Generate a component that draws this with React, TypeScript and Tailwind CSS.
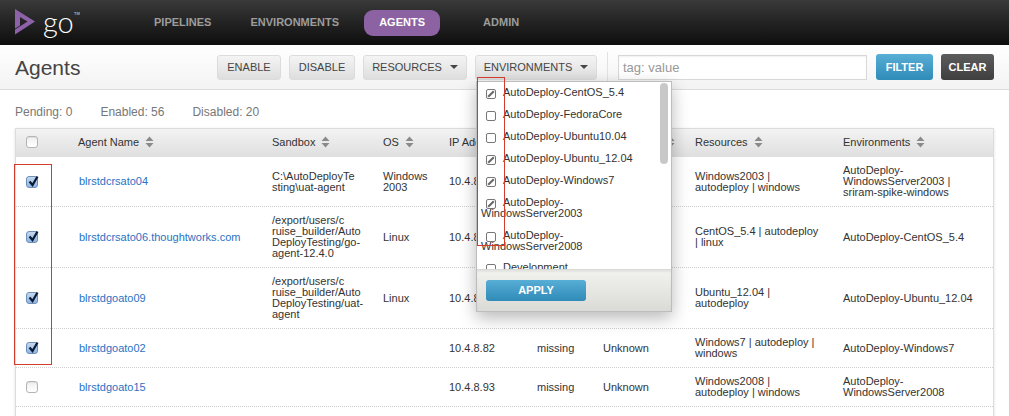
const navItems = [
  { label: 'PIPELINES', className: 'ml-[73px]' },
  { label: 'ENVIRONMENTS', className: 'ml-[39px]' },
]

const columnClass =
  'grid grid-cols-[63px_193px_111px_66px_88px_66px_92px_148px_1fr] items-center'

const agents = [
  {
    name: 'blrstdcrsato04',
    sandbox: ['C:\\AutoDeployTe', 'sting\\uat-agent'],
    os: ['Windows', '2003'],
    ip: '10.4.8.80',
    status: 'missing',
    space: 'Unknown',
    resources: ['Windows2003 |', 'autodeploy | windows'],
    environments: ['AutoDeploy-', 'WindowsServer2003 |', 'sriram-spike-windows'],
    checked: true,
    height: 'h-[50px]',
  },
  {
    name: 'blrstdcrsato06.thoughtworks.com',
    sandbox: ['/export/users/c', 'ruise_builder/Auto', 'DeployTesting/go-', 'agent-12.4.0'],
    os: ['Linux'],
    ip: '10.4.8.81',
    status: 'missing',
    space: 'Unknown',
    resources: ['CentOS_5.4 | autodeploy', '| linux'],
    environments: ['AutoDeploy-CentOS_5.4'],
    checked: true,
    height: 'h-[61px]',
  },
  {
    name: 'blrstdgoato09',
    sandbox: ['/export/users/c', 'ruise_builder/Auto', 'DeployTesting/uat-', 'agent'],
    os: ['Linux'],
    ip: '10.4.8.89',
    status: 'missing',
    space: 'Unknown',
    resources: ['Ubuntu_12.04 |', 'autodeploy'],
    environments: ['AutoDeploy-Ubuntu_12.04'],
    checked: true,
    height: 'h-[61px]',
  },
  {
    name: 'blrstdgoato02',
    sandbox: [],
    os: [],
    ip: '10.4.8.82',
    status: 'missing',
    space: 'Unknown',
    resources: ['Windows7 | autodeploy |', 'windows'],
    environments: ['AutoDeploy-Windows7'],
    checked: true,
    height: 'h-[39px]',
  },
  {
    name: 'blrstdgoato15',
    sandbox: [],
    os: [],
    ip: '10.4.8.93',
    status: 'missing',
    space: 'Unknown',
    resources: ['Windows2008 |', 'autodeploy | windows'],
    environments: ['AutoDeploy-', 'WindowsServer2008'],
    checked: false,
    height: 'h-[39px]',
  },
]

const environmentOptions = [
  { lines: ['AutoDeploy-CentOS_5.4'], checked: true, height: 'h-[22px]' },
  { lines: ['AutoDeploy-FedoraCore'], checked: false, height: 'h-[22px]' },
  { lines: ['AutoDeploy-Ubuntu10.04'], checked: false, height: 'h-[22px]' },
  { lines: ['AutoDeploy-Ubuntu_12.04'], checked: true, height: 'h-[22px]' },
  { lines: ['AutoDeploy-Windows7'], checked: true, height: 'h-[22px]' },
  { lines: ['AutoDeploy-', 'WindowsServer2003'], checked: true, height: 'h-[33px]' },
  { lines: ['AutoDeploy-', 'WindowsServer2008'], checked: false, height: 'h-[32px]' },
  { lines: ['Development'], checked: false, height: 'h-[22px]' },
]

function Lines({ lines }: { lines: string[] }) {
  return (
    <div>
      {lines.map((line) => (
        <div key={line} className="whitespace-nowrap">
          {line}
        </div>
      ))}
    </div>
  )
}

function Caret() {
  return <span className="ml-2 h-0 w-0 border-x-[4px] border-t-[4px] border-x-transparent border-t-[#444]" />
}

function SortIcon() {
  return (
    <svg width="9" height="12" viewBox="0 0 9 12" className="ml-[6px]">
      <path d="M4.5 0.5 8.5 5H0.5Z M0.5 7H8.5L4.5 11.5Z" fill="#8a8a8a" />
    </svg>
  )
}

function TableCheckbox({ checked }: { checked: boolean }) {
  if (!checked) {
    return (
      <span className="block size-[12px] rounded-[3px] border border-[#b5b5b5] bg-gradient-to-b from-[#f0f0f0] to-white shadow-[inset_0_1px_1px_rgba(0,0,0,0.08)]" />
    )
  }
  return (
    <span className="relative block size-[12px] rounded-[3px] border border-[#6d8fb8] bg-gradient-to-b from-[#c5d8ef] to-[#8fb6e6]">
      <svg width="14" height="14" viewBox="0 0 14 14" className="absolute -top-[3px] -left-[0.5px]">
        <path d="M2.5 7.5 5.5 11 10.5 2.5" fill="none" stroke="#0b1a33" strokeWidth="2.2" />
      </svg>
    </span>
  )
}

function MenuCheckbox({ checked }: { checked: boolean }) {
  return (
    <span className="flex size-[10px] shrink-0 items-center justify-center rounded-[2px] border border-[#777] bg-white">
      {checked && (
        <svg width="8" height="8" viewBox="0 0 8 8">
          <path d="M1.2 6.8 6.8 1.2" stroke="#666" strokeWidth="2" />
        </svg>
      )}
    </span>
  )
}

function ToolButton({ label, caret, className }: { label: string; caret?: boolean; className: string }) {
  return (
    <button className={`flex h-[25px] items-center justify-center rounded-[3px] border border-[#dcdcdc] bg-gradient-to-b from-[#f4f4f4] to-[#dedede] text-[11px] text-[#444] ${className}`}>
      {label}
      {caret && <Caret />}
    </button>
  )
}

function Logo() {
  return (
    <div className="relative flex h-[27px] w-[66px] items-start">
      <svg width="20" height="26" viewBox="0 0 20 26" className="shrink-0">
        <path d="M0 0 20 12.5 0 25.5V20.5L12.5 12.5 5 8V16.5L0 19.5Z" fill="#8d62a8" />
      </svg>
      <span className="-mt-[2px] ml-[8px] font-['Lato'] text-[29px] leading-[29px] font-light text-white">go</span>
      <span className="absolute top-[3px] left-[59px] text-[4px] leading-none text-[#aaa]">TM</span>
    </div>
  )
}

function Dropdown() {
  return (
    <div className="absolute top-[81px] left-[476px] z-10 w-[196px] border border-[#bdbdbd] bg-white shadow-[0_6px_16px_rgba(0,0,0,0.28)]">
      <div className="relative h-[187px] overflow-hidden pt-[1px] text-[11px] leading-[11px] text-[#333]">
        {environmentOptions.map((option) => (
          <div key={option.lines.join()} className={`relative flex ${option.height}`}>
            <span className="mt-[6px] ml-[9px]">
              <MenuCheckbox checked={option.checked} />
            </span>
            <div className="absolute top-[4px] left-[4px] w-[170px] indent-[22px]">
              {option.lines.map((line, index) => (
                <div key={line} className={index > 0 ? 'indent-0' : ''}>
                  {line}
                </div>
              ))}
            </div>
          </div>
        ))}
        <span className="absolute top-[1px] right-[3px] h-[81px] w-[8px] rounded-full bg-[#c8c8c8]" />
      </div>
      <div className="flex h-[42px] items-start border-t border-[#d8d8d4] bg-gradient-to-b from-[#f2f2ef] to-[#dadad6] px-[9px] pt-[10px] shadow-[inset_0_2px_2px_rgba(0,0,0,0.06)]">
        <button className="h-[21px] w-[100px] rounded-[3px] bg-gradient-to-b from-[#57aed6] to-[#2f8bb8] text-[11px] font-bold text-white">
          APPLY
        </button>
      </div>
    </div>
  )
}

export default function App() {
  return (
    <div className="relative h-[416px] w-[1009px] overflow-hidden bg-white font-['Liberation_Sans',Arial,sans-serif]">
      <header className="flex h-[45px] items-center bg-gradient-to-b from-[#3a3a3a] to-[#0e0e0e] pl-[15px] text-[11px] font-bold text-[#9c9c9c]">
        <Logo />
        {navItems.map((item) => (
          <a key={item.label} className={item.className}>
            {item.label}
          </a>
        ))}
        <a className="ml-[25px] flex h-[26px] w-[76px] items-center justify-center rounded-[9px] bg-[#8c62a3] text-white">
          AGENTS
        </a>
        <a className="ml-[43px]">ADMIN</a>
      </header>

      <div className="flex h-[45px] items-center border-b border-[#dcdcdc] bg-gradient-to-b from-white to-[#f3f3f3] pr-[15px] pl-[15px]">
        <h1 className="w-[202px] shrink-0 text-[21px] leading-none text-[#444]">Agents</h1>
        <div className="flex gap-2">
          <ToolButton label="ENABLE" className="w-[64px]" />
          <ToolButton label="DISABLE" className="w-[66px]" />
          <ToolButton label="RESOURCES" caret className="w-[104px]" />
          <ToolButton label="ENVIRONMENTS" caret className="w-[122px]" />
        </div>
        <span className="ml-[10px] h-[30px] w-px bg-[#e2e2e2]" />
        <input
          placeholder="tag: value"
          className="ml-[10px] h-[25px] w-[249px] border border-[#d8d8d8] bg-white px-[4px] text-[13px] shadow-[inset_0_1px_2px_rgba(0,0,0,0.06)] placeholder:text-[#999]"
        />
        <button className="ml-[9px] h-[26px] w-[57px] rounded-[3px] bg-gradient-to-b from-[#57aed6] to-[#2f8bb8] text-[11px] font-bold text-white">
          FILTER
        </button>
        <button className="ml-[8px] h-[26px] w-[53px] rounded-[3px] bg-gradient-to-b from-[#5c5c5c] to-[#3f3f3f] text-[11px] font-bold text-white">
          CLEAR
        </button>
      </div>

      <div className="flex h-[38px] items-center gap-[28px] pt-[6px] pl-[15px] text-[12px] text-[#777]">
        <span>Pending: 0</span>
        <span>Enabled: 56</span>
        <span>Disabled: 20</span>
      </div>

      <div className="mx-[15px] border border-[#dcdcdc] text-[11px] leading-[11px] text-[#333] shadow-[0_1px_3px_rgba(0,0,0,0.12)]">
        <div className={`${columnClass} h-[28px] bg-gradient-to-b from-[#f3f3f3] to-[#dfdfdf] pb-[2px]`}>
          <div className="pl-[10px]">
            <TableCheckbox checked={false} />
          </div>
          {['Agent Name', 'Sandbox', 'OS', 'IP Address', 'Status', 'Free Space', 'Resources', 'Environments'].map(
            (title, index) => (
              <div key={title} className={index === 0 ? '-ml-px flex items-center' : 'flex items-center'}>
                {title}
                <SortIcon />
              </div>
            ),
          )}
        </div>
        {agents.map((agent) => (
          <div key={agent.name} className={`${columnClass} ${agent.height} border-b border-dotted border-[#cfcfcf]`}>
            <div className="pl-[10px]">
              <TableCheckbox checked={agent.checked} />
            </div>
            <a className="text-[#2a72c4]">{agent.name}</a>
            <Lines lines={agent.sandbox} />
            <Lines lines={agent.os} />
            <div>{agent.ip}</div>
            <div>{agent.status}</div>
            <div>{agent.space}</div>
            <Lines lines={agent.resources} />
            <Lines lines={agent.environments} />
          </div>
        ))}
        <div className="h-[12px]" />
      </div>

      <Dropdown />

      <span className="pointer-events-none absolute top-[77px] left-[477px] z-20 h-[169px] w-[28px] border border-[#d23c2c]" />
      <span className="pointer-events-none absolute top-[164px] left-[14px] z-20 h-[201px] w-[38px] border border-[#d23c2c]" />
    </div>
  )
}
